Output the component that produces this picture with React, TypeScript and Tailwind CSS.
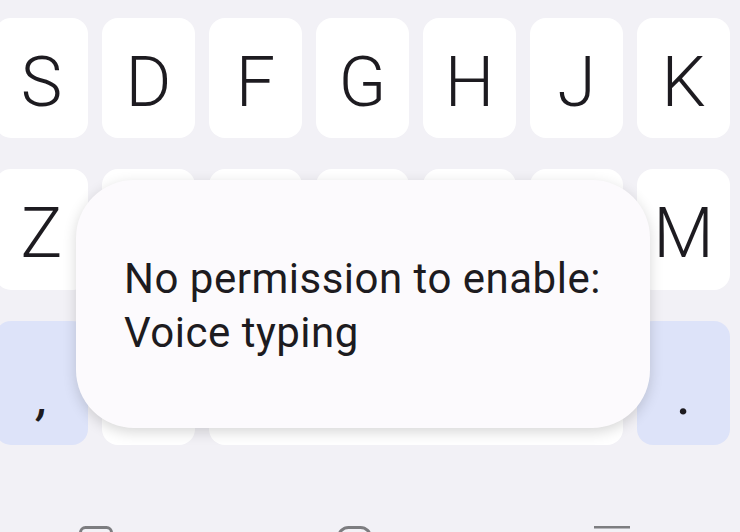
import React from "react";

/* ── Key rows (labels under the toast are hidden, so left blank) ── */
const ROW_1 = ["S", "D", "F", "G", "H", "J", "K"];
const ROW_2 = ["Z", "", "", "", "", "", "M"];

function LetterKey({ label }: { label: string }) {
  return (
    <div className="w-[93px] h-full shrink-0 rounded-[16px] bg-white flex items-center justify-center pt-[8px] text-[70px] font-light text-[#1d1b20]">
      {label}
    </div>
  );
}

export default function App() {
  return (
    <div className="relative w-[740px] h-[532px] overflow-hidden bg-[#f2f1f6] font-['Roboto','Noto_Sans',sans-serif]">
      {/* Keyboard */}
      <div className="ml-[-5px] pt-[18px] flex flex-col gap-[31px]">
        <div className="flex gap-[14px] h-[120px]">
          {ROW_1.map((k, i) => (
            <LetterKey key={i} label={k} />
          ))}
        </div>
        <div className="flex gap-[14px] h-[121px]">
          {ROW_2.map((k, i) => (
            <LetterKey key={i} label={k} />
          ))}
        </div>
        <div className="flex gap-[14px] h-[124px]">
          <div className="w-[93px] shrink-0 rounded-[16px] bg-[#dde3f9] flex items-end justify-center pb-[24px] pl-[3px] text-[46px] leading-none text-[#1d1b20] font-medium italic">
            ,
          </div>
          <div className="w-[93px] shrink-0 rounded-[16px] bg-white" />
          <div className="w-[414px] shrink-0 rounded-[16px] bg-white" />
          <div className="w-[93px] shrink-0 rounded-[16px] bg-[#dde3f9] flex items-end justify-center pb-[22px] text-[58px] leading-none text-[#1d1b20]">
            .
          </div>
        </div>
      </div>

      {/* Navigation bar (cut off at the bottom) */}
      <div className="flex items-start pl-[79px] pt-[81px] gap-[224px]">
        <svg width="34" height="34" viewBox="0 0 34 34" className="shrink-0">
          <rect x="1.5" y="1.5" width="31" height="31" rx="5" fill="none" stroke="#7d7d80" strokeWidth="3" />
        </svg>
        <svg width="35" height="35" viewBox="0 0 35 35" className="shrink-0">
          <rect x="1.5" y="1.5" width="32" height="32" rx="10" fill="none" stroke="#7d7d80" strokeWidth="3" />
        </svg>
        <svg width="36" height="34" viewBox="0 0 36 34" className="shrink-0 ml-[-2px]">
          <line x1="0" y1="1" x2="36" y2="1" stroke="#7d7d80" strokeWidth="3" />
        </svg>
      </div>

      {/* Toast overlay */}
      <div className="absolute left-[76px] top-[180px] w-[574px] h-[248px] rounded-[58px] bg-[#fcfafd] shadow-[0_4px_14px_rgba(0,0,0,0.16)] flex items-center pl-[48px] pr-[20px]">
        <p className="text-[42px] leading-[54px] tracking-[0.5px] text-[#1d1b20] pt-[3px]">
          No permission to enable:
          <br />
          Voice typing
        </p>
      </div>
    </div>
  );
}
